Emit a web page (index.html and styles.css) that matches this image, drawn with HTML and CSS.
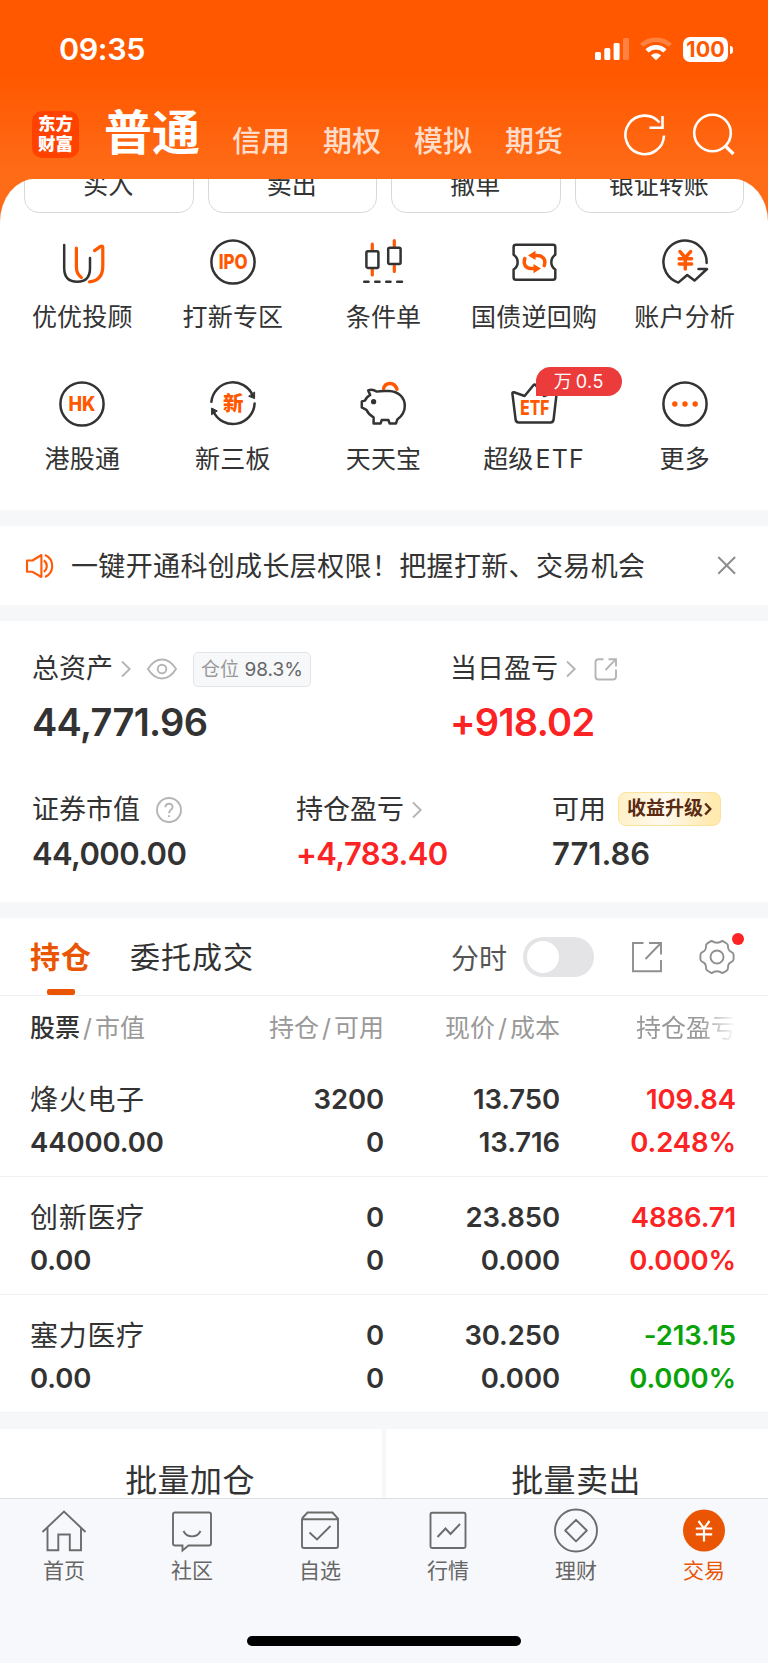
FILE: index.html
```html
<!DOCTYPE html>
<html lang="zh-CN">
<head>
  <meta charset="utf-8">
  <title>东方财富 - 交易</title>
  <link rel="stylesheet" href="styles.css">
</head>
<body>
  <div class="app">
    <header class="header">
      <div class="status-bar">
        <span class="time">09:35</span>
        <div class="status-icons">
          <svg class="signal" width="34" height="24" viewBox="0 0 34 24" fill="#fff">
            <rect x="0" y="15" width="6" height="8" rx="1.5"/>
            <rect x="9.3" y="11" width="6" height="12" rx="1.5"/>
            <rect x="18.6" y="6" width="6" height="17" rx="1.5"/>
            <rect x="28" y="1" width="6" height="22" rx="1.5" opacity=".25"/>
          </svg>
          <svg class="wifi" width="32" height="24" viewBox="0 0 32 24" fill="none" stroke="#fff" stroke-width="4.6">
            <path d="M1.8 8.4 A20.5 20.5 0 0 1 30.2 8.4" opacity=".25"/>
            <path d="M7 13.9 A13 13 0 0 1 25 13.9"/>
            <path d="M16 23.3 L11 18.4 A7 7 0 0 1 21 18.4 Z" fill="#fff" stroke="none"/>
          </svg>
          <span class="battery">100</span>
        </div>
      </div>
      <nav class="top-nav">
        <div class="logo"><span>东方</span><span>财富</span></div>
        <span class="account active">普通</span>
        <span class="account">信用</span>
        <span class="account">期权</span>
        <span class="account">模拟</span>
        <span class="account">期货</span>
        <div class="nav-icons">
          <svg width="44" height="44" viewBox="0 0 44 44" fill="none" stroke="#fff" stroke-width="2.6">
            <path d="M41 22.5 A19.3 19.3 0 1 1 36.5 9.5"/>
            <path d="M39.5 3 V14.7 H26.5"/>
          </svg>
          <svg width="44" height="44" viewBox="0 0 44 44" fill="none" stroke="#fff" stroke-width="2.6">
            <circle cx="20.5" cy="20" r="18.3"/>
            <path d="M32.8 32.5 L41.5 41" stroke-width="3.2"/>
          </svg>
        </div>
      </nav>
    </header>

    <main class="sheet">
      <div class="quick-clip">
        <div class="quick-actions">
          <button>买入</button>
          <button>卖出</button>
          <button>撤单</button>
          <button>银证转账</button>
        </div>
      </div>

      <section class="menu">
        <div class="menu-item">
          <svg class="menu-icon" viewBox="0 0 48 48">
            <path d="M6.2 7 V30 C6.2 39 11 43.8 19.3 43.8 S32 39 32 30 V20"/>
            <path class="hot" d="M18.4 10 V29 C18.4 34 20 37 23.3 39.5"/>
            <path class="hot" d="M36.6 12.6 L42.6 8.4 Q44.8 7.2 44.8 9.8 V28 C44.8 38 40 43 31.5 43.8"/>
          </svg>
          <span>优优投顾</span>
        </div>
        <div class="menu-item">
          <svg class="menu-icon" viewBox="0 0 48 48">
            <circle cx="24" cy="24" r="21.6"/>
            <text x="24.2" y="31.2" font-size="19.5" textLength="29" lengthAdjust="spacingAndGlyphs">IPO</text>
          </svg>
          <span>打新专区</span>
        </div>
        <div class="menu-item">
          <svg class="menu-icon" viewBox="0 0 48 48">
            <path class="hot" d="M13.3 6.2 V12 M13.3 31 V37 M35.3 2.5 V9 M35.3 28 V33.5"/>
            <rect x="7.4" y="13.3" width="12" height="16.6" rx="1.5"/>
            <rect x="29.2" y="9.8" width="12.4" height="16.2" rx="1.5"/>
            <path d="M5.2 43.7 H9.5 M16.2 43.7 H20.5 M27.2 43.7 H31.5 M38.2 43.7 H43"/>
          </svg>
          <span>条件单</span>
        </div>
        <div class="menu-item">
          <svg class="menu-icon" viewBox="0 0 48 48">
            <path d="M6 6.8 H43 Q45.3 6.8 45.3 9 V16.8 C40 20.5 40 28 45.3 31.5 V39.5 Q45.3 41.8 43 41.8 H6 Q3.6 41.8 3.6 39.5 V31.5 C9 28 9 20.5 3.6 16.8 V9 Q3.6 6.8 6 6.8 Z"/>
            <path class="hot thick" d="M25 17.6 H27 C33.6 17.6 36 22 34.3 27.6 M14.8 20.6 C13 26 15.6 30.6 21 30.6 H23.5"/>
            <path class="hot-fill" d="M18 17.6 L25.5 12.8 V22 Z M31 30.6 L23.5 26 V35.2 Z"/>
          </svg>
          <span>国债逆回购</span>
        </div>
        <div class="menu-item">
          <svg class="menu-icon" viewBox="0 0 48 48">
            <path d="M45.6 25 A21.6 21.6 0 1 0 17.3 44.6 L26.2 37 L33.5 42.6 L46 31 H37.5"/>
            <path class="hot thick" d="M19 13.6 L24.3 19.6 L29.6 13.6 M24.3 20 V31 M18.2 20.8 H30.6 M18.2 26 H30.6"/>
          </svg>
          <span>账户分析</span>
        </div>

        <div class="menu-item">
          <svg class="menu-icon" viewBox="0 0 48 48">
            <circle cx="24" cy="24" r="21.6"/>
            <text x="24" y="31" font-size="19.5" textLength="27" lengthAdjust="spacingAndGlyphs">HK</text>
          </svg>
          <span>港股通</span>
        </div>
        <div class="menu-item">
          <svg class="menu-icon" viewBox="0 0 48 48">
            <path d="M2.4 21.8 A21.6 21.6 0 0 1 43.8 15.6"/>
            <path d="M45.6 23.6 A21.6 21.6 0 0 1 4.4 31.4"/>
            <path class="solid" stroke-width="1" d="M45.6 12.4 V18.6 L40 16.4 Z M2.6 34.4 V28 L8 30.8 Z"/>
            <text class="cn" x="24.2" y="31.3" font-size="20.5">新</text>
          </svg>
          <span>新三板</span>
        </div>
        <div class="menu-item">
          <svg class="menu-icon" viewBox="0 0 48 48">
            <path class="hot thick" d="M24.6 8.4 C26.5 1.6 35.5 1.6 38 9.2"/>
            <path d="M9.2 10.4 C12 9.4 15 9.8 17.5 11.6 C21 10.8 25 10.8 30 11 C39.5 11.4 45.8 17.5 45.8 26 C45.8 31 43 36 38.3 39.6 L37 43.4 H30.6 L29.4 40 H22.8 L21.6 43.4 H14.6 V37.4 C11.2 35.6 8.8 33 7.4 29.8 L2.8 27.4 V21.4 L6 20.6 C6.8 18.2 8.4 16.6 11.2 15 Z"/>
            <circle class="solid" cx="14.6" cy="21.7" r="1.4"/>
          </svg>
          <span>天天宝</span>
        </div>
        <div class="menu-item">
          <svg class="menu-icon" viewBox="0 0 48 48">
            <path d="M4 12.2 L14.6 16 L23.6 5 Q24.6 4 25.6 5 L34 16 L45 12.2 Q46.8 11.8 46.6 13.6 L43.6 39.5 Q43.2 42.4 40.6 42.4 H8.6 Q6 42.4 5.6 39.5 L2.4 13.6 Q2.2 11.8 4 12.2 Z"/>
            <text x="24.8" y="35.2" font-size="20" textLength="29" lengthAdjust="spacingAndGlyphs">ETF</text>
          </svg>
          <em class="promo">万 0.5</em>
          <span>超级<span class="latin">ETF</span></span>
        </div>
        <div class="menu-item">
          <svg class="menu-icon" viewBox="0 0 48 48">
            <circle cx="24" cy="24" r="21.6"/>
            <g class="hot-fill"><circle cx="13.8" cy="24" r="2.7"/><circle cx="24" cy="24" r="2.7"/><circle cx="34.2" cy="24" r="2.7"/></g>
          </svg>
          <span>更多</span>
        </div>
      </section>

      <section class="notice">
        <svg width="28" height="28" viewBox="0 0 28 28" fill="none" stroke="#ff5a0a" stroke-width="2.1">
          <path d="M2 8.5 H7.5 L16.4 3 V25 L7.5 19.8 H2 Z" stroke-linejoin="round"/>
          <path d="M18.8 8.3 A7 7 0 0 1 18.8 19.8 M20 3 A12 12 0 0 1 20 25"/>
        </svg>
        <p>一键开通科创成长层权限！把握打新、交易机会</p>
        <svg width="18" height="18" viewBox="0 0 18 18" stroke="#8d8d8d" stroke-width="2">
          <path d="M.3 0 L17.1 16.8 M17.1 0 L.3 16.8"/>
        </svg>
      </section>

      <section class="assets">
        <div class="asset-row main-row">
          <div class="asset">
            <div class="asset-label">
              总资产
              <svg class="chevron" viewBox="0 0 10 18"><path d="M1 1.5 L8.7 9 L1 16.5"/></svg>
              <svg class="eye" viewBox="0 0 30 22"><path d="M1 11 C5 4.5 9.5 1.5 15 1.5 S25 4.5 29 11 C25 17.5 20.5 20.5 15 20.5 S5 17.5 1 11 Z"/><circle cx="15" cy="11" r="4.3"/></svg>
              <span class="position">仓位 <b>98.3%</b></span>
            </div>
            <div class="asset-value">44,771.96</div>
          </div>
          <div class="asset">
            <div class="asset-label">
              当日盈亏
              <svg class="chevron" viewBox="0 0 10 18"><path d="M1 1.5 L8.7 9 L1 16.5"/></svg>
              <svg class="share" viewBox="0 0 24 24"><path d="M9.5 2.2 H4.5 Q1.5 2.2 1.5 5.2 V19.5 Q1.5 22.5 4.5 22.5 H19 Q22 22.5 22 19.5 V12.5 M14.5 2.2 H22 V9.5 M21.5 2.7 L11.5 13"/></svg>
            </div>
            <div class="asset-value up">+918.02</div>
          </div>
        </div>
        <div class="asset-row sub-row">
          <div class="asset">
            <div class="asset-label">
              证券市值
              <svg class="help" viewBox="0 0 26 26"><circle cx="13" cy="13" r="12"/><path d="M9.4 10.2 C9.4 5.6 16.6 5.6 16.6 10 C16.6 12.8 13 12.8 13 16.2 M13 18.2 V20"/></svg>
            </div>
            <div class="asset-value">44,000.00</div>
          </div>
          <div class="asset">
            <div class="asset-label">
              持仓盈亏
              <svg class="chevron" viewBox="0 0 10 18"><path d="M1 1.5 L8.7 9 L1 16.5"/></svg>
            </div>
            <div class="asset-value up">+4,783.40</div>
          </div>
          <div class="asset">
            <div class="asset-label">
              可用
              <span class="upgrade">收益升级<svg width="8" height="14" viewBox="0 0 8 14"><path d="M1.2 1.5 L6.3 7 L1.2 12.5"/></svg></span>
            </div>
            <div class="asset-value available">771.86</div>
          </div>
        </div>
      </section>

      <section class="holdings">
        <div class="tabs">
          <span class="tab active">持仓</span>
          <span class="tab">委托成交</span>
          <span class="chart-label">分时</span>
          <span class="switch"></span>
          <svg class="export" width="32" height="32" viewBox="0 0 32 32"><path d="M12.5 2 H2 V30.2 H30 V19 M18 2 H30 V13.5 M29.5 2.5 L14.5 18"/></svg>
          <div class="settings">
            <svg width="36" height="36" viewBox="0 0 36 36"><path d="M12.6 1.9 Q18 5.6 23.4 1.9 L27.4 4.2 Q29.2 5.2 29 7.4 Q28.8 11.6 32.6 13.2 Q34.6 14 34.6 16 V20 Q34.6 22 32.6 22.8 Q28.8 24.4 29 28.6 Q29.2 30.8 27.4 31.8 L23.4 34.1 Q18 30.4 12.6 34.1 L8.6 31.8 Q6.8 30.8 7 28.6 Q7.2 24.4 3.4 22.8 Q1.4 22 1.4 20 V16 Q1.4 14 3.4 13.2 Q7.2 11.6 7 7.4 Q6.8 5.2 8.6 4.2 Z" stroke-linejoin="round"/><circle cx="18" cy="18" r="6.5"/></svg>
            <i class="dot"></i>
          </div>
        </div>

        <div class="row table-head">
          <span><b>股票</b><u>/</u>市值</span>
          <span>持仓<u>/</u>可用</span>
          <span>现价<u>/</u>成本</span>
          <span class="fade">持仓盈亏</span>
        </div>

        <div class="row stock">
          <div><span class="name">烽火电子</span><span>44000.00</span></div>
          <div><span>3200</span><span>0</span></div>
          <div><span>13.750</span><span>13.716</span></div>
          <div class="up"><span>109.84</span><span>0.248%</span></div>
        </div>
        <div class="row stock">
          <div><span class="name">创新医疗</span><span>0.00</span></div>
          <div><span>0</span><span>0</span></div>
          <div><span>23.850</span><span>0.000</span></div>
          <div class="up"><span>4886.71</span><span>0.000%</span></div>
        </div>
        <div class="row stock">
          <div><span class="name">塞力医疗</span><span>0.00</span></div>
          <div><span>0</span><span>0</span></div>
          <div><span>30.250</span><span>0.000</span></div>
          <div class="down"><span>-213.15</span><span>0.000%</span></div>
        </div>
      </section>

      <section class="batch">
        <button>批量加仓</button>
        <button>批量卖出</button>
      </section>
    </main>

    <footer class="tab-bar">
      <div class="tab-items">
        <div class="tab-item">
          <svg viewBox="0 0 46 46"><path d="M1.5 23 L23 2.5 L44.5 23 M6.5 19 V41.3 H17.3 V25.5 H28.8 V41.3 H40 V19"/></svg>
          <span>首页</span>
        </div>
        <div class="tab-item">
          <svg viewBox="0 0 46 46"><path d="M6 3.5 H40 Q42 3.5 42 5.5 V34.5 Q42 36.5 40 36.5 H19.5 L13.5 41.5 V36.5 H6 Q4 36.5 4 34.5 V5.5 Q4 3.5 6 3.5 Z M14.5 22 C18 29.2 28 29.2 31.5 22"/></svg>
          <span>社区</span>
        </div>
        <div class="tab-item">
          <svg viewBox="0 0 46 46"><path d="M5 9.5 L10.5 3.5 H35.5 L41 9.5 V37 Q41 39 39 39 H7 Q5 39 5 37 V9.5 M5 10.2 H41 M12.5 23.5 L20 30.5 L33.5 17"/></svg>
          <span>自选</span>
        </div>
        <div class="tab-item">
          <svg viewBox="0 0 46 46"><rect x="5.5" y="3.7" width="35" height="35.3" rx="1.5"/><path d="M12.5 28 L20.5 19.5 L25.5 25 L35 15"/></svg>
          <span>行情</span>
        </div>
        <div class="tab-item">
          <svg viewBox="0 0 46 46"><circle cx="23" cy="21.5" r="21"/><path d="M23 10.8 L33.8 21.5 L23 32.3 L12.2 21.5 Z" stroke-linejoin="round"/></svg>
          <span>理财</span>
        </div>
        <div class="tab-item active">
          <svg viewBox="0 0 46 46"><circle class="coin" cx="23" cy="21.5" r="21"/><path class="yen" d="M17.5 12 L23 19.5 L28.5 12 M23 19.5 V32.5 M14.8 19.5 H31.2 M14.8 25.3 H31.2"/></svg>
          <span>交易</span>
        </div>
      </div>
      <div class="home-indicator"></div>
    </footer>
  </div>
</body>
</html>
```
FILE: styles.css
```css
:root {
    --orange: #ff5800;
    --brand: #ea5504;
    --text: #333;
    --gray: #999;
    --red: #fb2323;
    --green: #09a309;
    --band: #f6f7f9;
}

* {
    box-sizing: border-box;
}

body {
    margin: 0;
    font-family: Inter, "Noto Sans CJK SC", sans-serif;
    color: var(--text);
    background: #fff;
}

button {
    font-family: inherit;
    color: inherit;
    background: #fff;
    border: none;
    padding: 0;
}

svg {
    display: block;
    flex: none;
    overflow: visible;
}

.app {
    width: 768px;
    height: 1663px;
    display: flex;
    flex-direction: column;
    overflow: hidden;
    background: linear-gradient(#ff5800 0, #ff5800 75px, #ff6c18 178px, #ff6c18 240px);
}

/* header */
.header {
    height: 179px;
    flex: none;
}

.status-bar {
    height: 98px;
    padding: 0 36px 0 59px;
    display: flex;
    justify-content: space-between;
    align-items: center;
    color: #fff;
}

.time {
    font-size: 30.5px;
    font-weight: 600;
    letter-spacing: -0.4px;
    line-height: 40px;
}

.status-icons {
    display: flex;
    align-items: center;
    gap: 11px;
}

.battery {
    position: relative;
    width: 45px;
    height: 25px;
    margin-right: 4px;
    border-radius: 7px;
    background: #fff;
    color: var(--orange);
    font-size: 21.5px;
    font-weight: 700;
    line-height: 25px;
    text-align: center;
}

.battery::after {
    content: "";
    position: absolute;
    right: -5px;
    top: 9px;
    width: 3px;
    height: 8px;
    border-radius: 0 4px 4px 0;
    background: #fff;
}

.top-nav {
    height: 72px;
    padding: 0 32px 0 32px;
    display: flex;
    align-items: center;
    color: #fff;
}

.logo {
    width: 47px;
    height: 47px;
    border-radius: 10px;
    background: #ff4200;
    display: flex;
    flex-direction: column;
    justify-content: center;
    align-items: center;
    font-size: 17.5px;
    font-weight: 900;
    line-height: 20px;
}

.account {
    margin: 16px 0 0 33px;
    font-size: 29px;
    font-weight: 500;
    line-height: 40px;
    color: rgba(255, 255, 255, 0.8);
}

.account.active {
    margin: -2px -1px 0 25px;
    font-size: 48px;
    font-weight: 700;
    line-height: 60px;
    color: #fff;
}

.nav-icons {
    margin: 2px 0 0 auto;
    display: flex;
    gap: 25px;
}

/* white sheet */
.sheet {
    flex: 1;
    min-height: 0;
    overflow: hidden;
    background: #fff;
    border-radius: 35px 35px 0 0 / 43px 43px 0 0;
}

.quick-clip {
    height: 35px;
    overflow: hidden;
    display: flex;
    align-items: flex-end;
}

.quick-actions {
    flex: 1;
    padding: 0 24px 1px;
    display: grid;
    grid-template-columns: repeat(4, 1fr);
    gap: 14px;
}

.quick-actions button {
    height: 60px;
    border: 1px solid #d8d8d8;
    border-radius: 15px;
    font-size: 25px;
    padding: 0 1px 1px 0;
}

.menu {
    height: 296px;
    padding: 24px 8px 0 7px;
    display: grid;
    grid-template-columns: repeat(5, 1fr);
    grid-auto-rows: 142px;
}

.menu-item {
    position: relative;
    display: flex;
    flex-direction: column;
    align-items: center;
    font-size: 25px;
    letter-spacing: 0.2px;
    line-height: 36px;
    white-space: nowrap;
}

.menu-icon {
    width: 48px;
    height: 48px;
    margin-bottom: 13px;
    fill: none;
    stroke: #333;
    stroke-width: 2.5;
    stroke-linecap: round;
    stroke-linejoin: round;
}

.menu-icon .hot {
    stroke: var(--orange);
    stroke-width: 3.2;
}

.menu-icon .thick {
    stroke-width: 3.5;
}

.menu-icon .hot-fill {
    fill: var(--orange);
    stroke: none;
}

.menu-icon .solid {
    fill: #333;
}

.menu-icon text {
    fill: var(--orange);
    stroke: none;
    font-weight: 800;
    letter-spacing: 0;
    text-anchor: middle;
}

.latin {
    margin-left: 2px;
    letter-spacing: 1.2px;
}

.promo {
    position: absolute;
    left: 77px;
    top: -13px;
    width: 86px;
    height: 29px;
    border-radius: 15px 15px 15px 0;
    background: #ec3b3b;
    color: #fff;
    font-size: 18px;
    font-style: normal;
    letter-spacing: 0.5px;
    word-spacing: -2px;
    line-height: 29px;
    text-align: center;
}

.notice {
    height: 111px;
    padding: 0 32px 0 25px;
    border: solid var(--band);
    border-width: 16px 0;
    display: flex;
    align-items: center;
}

.notice p {
    flex: 1;
    margin: -2px 0 0 18px;
    font-size: 27px;
    letter-spacing: 0.35px;
}

/* assets */
.assets {
    height: 297px;
    padding-top: 28px;
    border-bottom: 16px solid var(--band);
}

.asset-row {
    display: grid;
    padding-left: 32px;
}

.main-row {
    height: 141px;
    grid-template-columns: 418px 1fr;
}

.sub-row {
    grid-template-columns: 264px 256px 1fr;
}

.asset-label {
    height: 40px;
    display: flex;
    align-items: center;
    font-size: 27px;
    line-height: 40px;
    white-space: nowrap;
}

.asset-value {
    margin-top: 11px;
    font-size: 38px;
    font-weight: 600;
    line-height: 44px;
    letter-spacing: -0.7px;
}

.sub-row .asset-value {
    margin-top: 5px;
    font-size: 31px;
    line-height: 38px;
    letter-spacing: -0.6px;
}

.sub-row .asset-value.available {
    letter-spacing: 0;
}

.up,
.asset-value.up {
    color: var(--red);
}

.down {
    color: var(--green);
}

.chevron,
.eye,
.share,
.help {
    fill: none;
    stroke: #b5b5b5;
    stroke-width: 1.9;
}

.chevron {
    width: 10px;
    height: 18px;
    margin-left: 8px;
}

.eye {
    width: 30px;
    height: 22px;
    margin-left: 16px;
}

.share {
    width: 24px;
    height: 24px;
    margin-left: 18px;
}

.help {
    width: 26px;
    height: 26px;
    margin-left: 16px;
}

.position {
    width: 118px;
    height: 35px;
    margin-left: 16px;
    border: 1px solid #e3e4e8;
    border-radius: 5px;
    background: #f7f8fa;
    color: #999;
    font-size: 19px;
    line-height: 34px;
    text-align: center;
}

.position b {
    font-weight: 400;
    color: #666;
}

.upgrade {
    width: 103px;
    height: 34px;
    margin: -3px 0 0 12px;
    border: 1px solid #fbe39b;
    border-radius: 8px;
    background: linear-gradient(100deg, #fff0c4, #fffaf0 45%, #ffeab0 90%);
    color: #5b2a12;
    display: flex;
    align-items: center;
    justify-content: center;
    gap: 1px;
    font-size: 19px;
    font-weight: 700;
}

.upgrade svg {
    fill: none;
    stroke: #5b2a12;
    stroke-width: 2.4;
}

/* holdings */
.tabs {
    height: 78px;
    padding: 0 33px 0 30px;
    border-bottom: 1px solid #f0f1f3;
    display: flex;
    align-items: center;
}

.tab {
    position: relative;
    margin-right: 39px;
    font-size: 30px;
    letter-spacing: 1px;
    line-height: 78px;
}

.tab.active {
    margin-right: 38px;
    color: var(--brand);
    font-weight: 700;
}

.tab.active::after {
    content: "";
    position: absolute;
    left: 17px;
    bottom: 1px;
    width: 28px;
    height: 6px;
    border-radius: 2px;
    background: var(--brand);
}

.chart-label {
    margin-left: auto;
    font-size: 28px;
    color: #555;
}

.switch {
    width: 71px;
    height: 40px;
    margin: 0 37px 0 16px;
    padding: 4px;
    border-radius: 20px;
    background: #e4e4e6;
}

.switch::before {
    content: "";
    display: block;
    width: 32px;
    height: 32px;
    border-radius: 50%;
    background: #fff;
}

.export,
.settings svg {
    fill: none;
    stroke: #8f8f8f;
    stroke-width: 1.9;
}

.settings {
    position: relative;
    margin-left: 36px;
}

.dot {
    position: absolute;
    top: -6px;
    right: -9px;
    width: 12px;
    height: 12px;
    border-radius: 50%;
    background: var(--red);
}

.row {
    padding: 0 32px 0 30px;
    display: grid;
    grid-template-columns: 1fr 160px 176px 176px;
    text-align: right;
}

.row > :first-child {
    text-align: left;
}

.table-head {
    height: 63px;
    font-size: 25px;
    line-height: 65px;
    color: var(--gray);
}

.table-head b {
    font-weight: 500;
    color: var(--text);
}

.table-head u {
    margin: 0 3px;
    text-decoration: none;
}

.fade {
    -webkit-mask-image: linear-gradient(90deg, #000 80%, transparent);
    mask-image: linear-gradient(90deg, #000 80%, transparent);
}

.stock {
    height: 118px;
    padding-top: 19px;
    border-bottom: 1px solid #f1f2f4;
    font-size: 27.5px;
    font-weight: 600;
    letter-spacing: -0.1px;
    line-height: 43px;
}

.stock span {
    display: block;
    height: 43px;
}

.stock .name {
    font-size: 28px;
    font-weight: 400;
    letter-spacing: 0.7px;
    line-height: 44px;
}

.batch {
    height: 120px;
    border-top: 16px solid var(--band);
    background: var(--band);
    display: grid;
    grid-template-columns: 1fr 1fr;
    gap: 4px;
}

.batch button {
    padding: 0 2px 7px 0;
    font-size: 32px;
    letter-spacing: 0.4px;
}

/* bottom bar */
.tab-bar {
    height: 165px;
    flex: none;
    border-top: 1px solid #dedfe3;
    background: #f7f8fb;
}

.tab-items {
    height: 137px;
    padding-top: 10px;
    display: grid;
    grid-template-columns: repeat(6, 1fr);
}

.tab-item {
    display: flex;
    flex-direction: column;
    align-items: center;
    color: #666;
    font-size: 21px;
    line-height: 30px;
}

.tab-item svg {
    width: 46px;
    height: 46px;
    margin-bottom: 1px;
    fill: none;
    stroke: #6c6c6c;
    stroke-width: 1.9;
}

.tab-item.active {
    color: var(--brand);
}

.tab-item .coin {
    fill: var(--brand);
    stroke: none;
}

.tab-item .yen {
    stroke: #fff;
    stroke-width: 2.2;
}

.home-indicator {
    width: 274px;
    height: 10px;
    margin: 0 auto;
    border-radius: 5px;
    background: #000;
}
```
